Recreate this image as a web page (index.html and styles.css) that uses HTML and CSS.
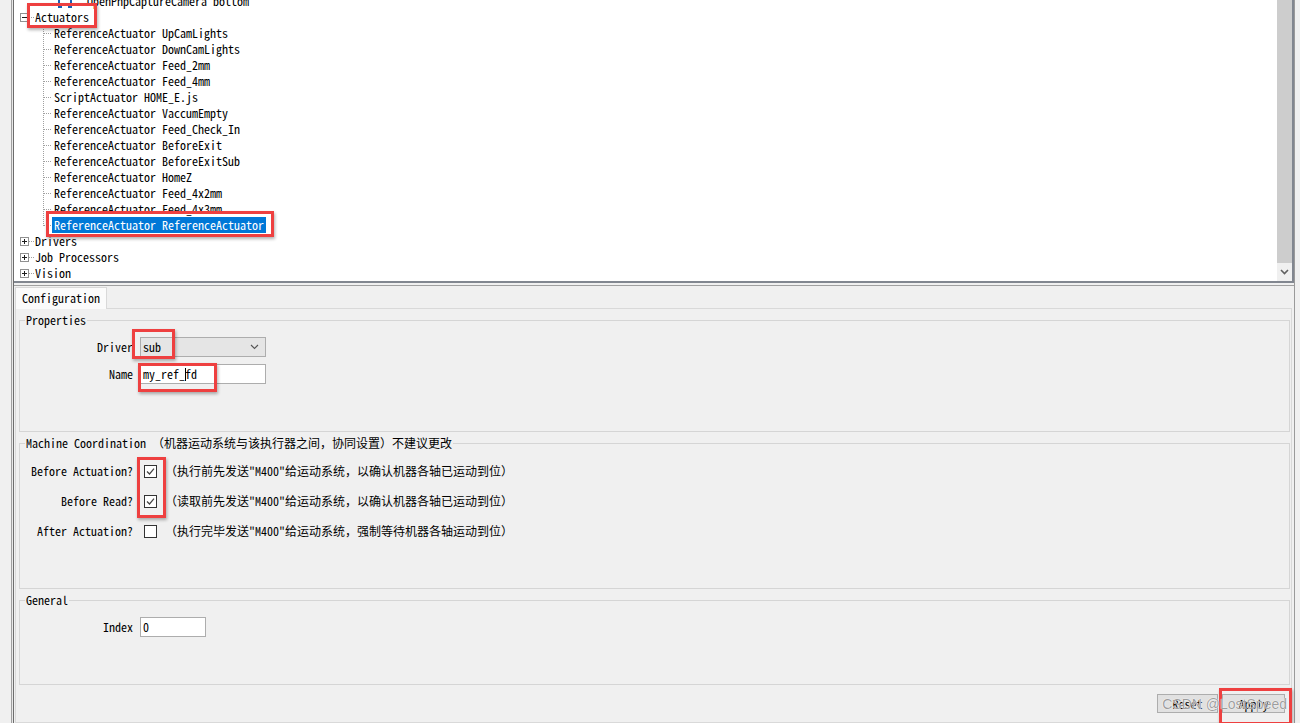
FILE: index.html
```html
<!DOCTYPE html>
<html>
<head>
<meta charset="utf-8">
<link rel="stylesheet" href="styles.css">
</head>
<body>
<div class="app">
  <div class="side"></div>
  <div class="sash"></div>
  <div class="main">
    <div class="tree">
      <div class="tree-view">
        <div class="nodes">
          <div class="row cam-row"><span class="cam-ico"><svg width="16" height="16" viewBox="0 0 16 16"><path d="M2 3v11h3M14 3v11h-3" stroke="#1a5fb4" stroke-width="2" fill="none"/></svg></span><span class="lbl">OpenPnpCaptureCamera bottom</span></div>
          <div class="row top"><span class="exp"><svg width="9" height="9" viewBox="0 0 9 9"><rect x="0.5" y="0.5" width="8" height="8" fill="#fff" stroke="#919191"/><path d="M2 4.5h5" stroke="#1e1e1e"/></svg></span><span class="hline"></span><span class="lbl mark mark-act">Actuators</span></div>
          <div class="row child"><span class="twig"></span><span class="lbl">ReferenceActuator UpCamLights</span></div>
          <div class="row child"><span class="twig"></span><span class="lbl">ReferenceActuator DownCamLights</span></div>
          <div class="row child"><span class="twig"></span><span class="lbl">ReferenceActuator Feed_2mm</span></div>
          <div class="row child"><span class="twig"></span><span class="lbl">ReferenceActuator Feed_4mm</span></div>
          <div class="row child"><span class="twig"></span><span class="lbl">ScriptActuator HOME_E.js</span></div>
          <div class="row child"><span class="twig"></span><span class="lbl">ReferenceActuator VaccumEmpty</span></div>
          <div class="row child"><span class="twig"></span><span class="lbl">ReferenceActuator Feed_Check_In</span></div>
          <div class="row child"><span class="twig"></span><span class="lbl">ReferenceActuator BeforeExit</span></div>
          <div class="row child"><span class="twig"></span><span class="lbl">ReferenceActuator BeforeExitSub</span></div>
          <div class="row child"><span class="twig"></span><span class="lbl">ReferenceActuator HomeZ</span></div>
          <div class="row child"><span class="twig"></span><span class="lbl">ReferenceActuator Feed_4x2mm</span></div>
          <div class="row child"><span class="twig"></span><span class="lbl">ReferenceActuator Feed_4x3mm</span></div>
          <div class="row child"><span class="twig last"></span><span class="lbl sel mark mark-sel">ReferenceActuator ReferenceActuator</span></div>
          <div class="row top"><span class="exp"><svg width="9" height="9" viewBox="0 0 9 9"><rect x="0.5" y="0.5" width="8" height="8" fill="#fff" stroke="#919191"/><path d="M2 4.5h5M4.5 2v5" stroke="#1e1e1e"/></svg></span><span class="hline"></span><span class="lbl">Drivers</span></div>
          <div class="row top"><span class="exp"><svg width="9" height="9" viewBox="0 0 9 9"><rect x="0.5" y="0.5" width="8" height="8" fill="#fff" stroke="#919191"/><path d="M2 4.5h5M4.5 2v5" stroke="#1e1e1e"/></svg></span><span class="hline"></span><span class="lbl">Job Processors</span></div>
          <div class="row top"><span class="exp"><svg width="9" height="9" viewBox="0 0 9 9"><rect x="0.5" y="0.5" width="8" height="8" fill="#fff" stroke="#919191"/><path d="M2 4.5h5M4.5 2v5" stroke="#1e1e1e"/></svg></span><span class="hline"></span><span class="lbl">Vision</span></div>
        </div>
      </div>
      <div class="vscroll">
        <div class="thumb"></div>
        <div class="arrow"><svg width="9" height="6" viewBox="0 0 9 6"><path d="M1 1l3.5 3.5L8 1" stroke="#606060" stroke-width="1.6" fill="none"/></svg></div>
      </div>
    </div>
    <div class="split"></div>
    <div class="tabs"><div class="tab">Configuration</div></div>
    <div class="panel">
      <fieldset class="group g-props">
        <legend>Properties</legend>
        <div class="form">
          <span class="flabel">Driver</span>
          <div class="combo mark mark-sub"><span>sub</span><svg width="9" height="6" viewBox="0 0 9 6"><path d="M1 1l3.5 3.5L8 1" stroke="#555" stroke-width="1.1" fill="none"/></svg></div>
          <span class="flabel">Name</span>
          <div class="field wide mark mark-name">my_ref_<i class="caret"></i>fd</div>
        </div>
      </fieldset>
      <fieldset class="group g-coord">
        <legend>Machine Coordination （机器运动系统与该执行器之间，协同设置）不建议更改</legend>
        <div class="form checks">
          <span class="flabel">Before Actuation?</span>
          <div class="crow"><span class="cb mark mark-cb"><svg width="13" height="13" viewBox="0 0 13 13"><rect x="0.5" y="0.5" width="12" height="12" fill="#fff" stroke="#333"/><path d="M3 6.5l2.5 2.5L10 3.6" stroke="#444" stroke-width="1.2" fill="none"/></svg></span><span class="note">（执行前先发送"M400"给运动系统，以确认机器各轴已运动到位）</span></div>
          <span class="flabel">Before Read?</span>
          <div class="crow"><span class="cb"><svg width="13" height="13" viewBox="0 0 13 13"><rect x="0.5" y="0.5" width="12" height="12" fill="#fff" stroke="#333"/><path d="M3 6.5l2.5 2.5L10 3.6" stroke="#444" stroke-width="1.2" fill="none"/></svg></span><span class="note">（读取前先发送"M400"给运动系统，以确认机器各轴已运动到位）</span></div>
          <span class="flabel">After Actuation?</span>
          <div class="crow"><span class="cb"><svg width="13" height="13" viewBox="0 0 13 13"><rect x="0.5" y="0.5" width="12" height="12" fill="#fff" stroke="#333"/></svg></span><span class="note">（执行完毕发送"M400"给运动系统，强制等待机器各轴运动到位）</span></div>
        </div>
      </fieldset>
      <fieldset class="group g-general">
        <legend>General</legend>
        <div class="form">
          <span class="flabel">Index</span>
          <div class="field short">0</div>
        </div>
      </fieldset>
      <div class="actions">
        <button class="btn reset">Reset</button>
        <button class="btn apply mark mark-apply">Apply</button>
        <span class="wm">CSDN @LostSpeed</span>
      </div>
    </div>
  </div>
  <div class="rstrip"></div>
</div>
</body>
</html>
```
FILE: styles.css
```css
* { box-sizing: border-box; }
html, body { margin: 0; padding: 0; }
body {
  width: 1300px;
  height: 723px;
  overflow: hidden;
  background: #f0f0f0;
  color: #000;
  font-family: "Noto Sans Mono CJK SC", "Liberation Mono", "Noto Sans CJK SC", monospace;
  font-size: 12px;
  line-height: 16px;
}
.app { display: flex; height: 723px; }
.side { width: 11px; background: #f0f0f0; }
.sash {
  width: 3px;
  border-left: 1px solid #a0a0a0;
  border-right: 1px solid #6d6d6d;
  background: #e8e8e8;
}
.main { width: 1280px; display: flex; flex-direction: column; }
.rstrip { width: 6px; border-left: 1px solid #9a9a9a; background: #f0f0f0; }

/* tree */
.tree {
  height: 283px;
  display: flex;
  background: #fff;
  border-bottom: 2px solid #828790;
  border-right: 2px solid #828790;
}
.tree-view { flex: 1; overflow: hidden; }
.nodes { margin-top: -7px; }
.row { height: 16px; display: flex; align-items: center; white-space: pre; }
.lbl { display: inline-block; height: 16px; line-height: 16px; }
.cam-row .cam-ico { width: 16px; height: 16px; margin-left: 43px; }
.cam-row .lbl { margin-left: 14px; }
.top .exp { width: 9px; height: 9px; margin-left: 6px; display: flex; }
.top .hline {
  width: 6px;
  height: 1px;
  background-image: repeating-linear-gradient(to right, #a0a0a0 0 1px, transparent 1px 2px);
}
.child .twig {
  width: 9px;
  height: 16px;
  margin-left: 29px;
  background-image:
    repeating-linear-gradient(to bottom, #a0a0a0 0 1px, transparent 1px 2px),
    repeating-linear-gradient(to right, #a0a0a0 0 1px, transparent 1px 2px);
  background-size: 1px 16px, 8px 1px;
  background-position: 0 0, 1px 8px;
  background-repeat: no-repeat;
}
.child .twig.last { background-size: 1px 9px, 8px 1px; }
.child .lbl { padding: 0 2px; }
.sel { background: #0078d7; color: #fff; }

.vscroll { width: 15px; display: flex; flex-direction: column; background: #f0f0f0; }
.vscroll .thumb { flex: 1; background: #cdcdcd; }
.vscroll .arrow { height: 18px; display: flex; align-items: center; justify-content: center; }

.split { height: 3px; border-bottom: 1px solid #a0a0a0; }
.tabs { height: 22px; padding-top: 1px; display: flex; }
.tab {
  margin-left: 1px;
  height: 22px;
  padding: 0 6px;
  line-height: 20px;
  border: 1px solid #d9d9d9;
  border-bottom: 0;
  background: #fbfbfb;
  position: relative;
  z-index: 1;
}

.panel {
  flex: 1;
  margin: 0 2px 0 1px;
  border: 1px solid #d9d9d9;
  background: #f0f0f0;
  padding: 5px 1px 0 3px;
}
.group {
  margin: 0;
  padding: 0;
  border: 1px solid #d5d5d5;
  min-inline-size: 0;
}
.group legend {
  margin-left: 5px;
  padding: 0 1px;
  line-height: 12px;
  height: 12px;
}
.g-coord { margin-top: 5px; }
.g-general { margin-top: 5px; }

.form {
  display: grid;
  grid-template-columns: 113px auto;
  column-gap: 7px;
  row-gap: 7px;
  padding: 11px 0 47px 0;
  align-items: center;
  justify-content: start;
}
.flabel { text-align: right; line-height: 20px; }
.combo {
  width: 126px;
  height: 20px;
  border: 1px solid #adadad;
  background: #e5e5e5;
  display: flex;
  align-items: center;
  justify-content: space-between;
  padding: 0 6px 0 2px;
}
.field {
  height: 20px;
  border: 1px solid #adadad;
  background: #fff;
  padding-left: 2px;
  line-height: 18px;
  white-space: pre;
}
.field.wide { width: 126px; }
.field.short { width: 66px; }
.caret { display: inline-block; width: 1px; height: 13px; background: #000; vertical-align: -2px; margin-right: -1px; }

.checks { row-gap: 10px; padding: 12px 0 47px 0; }
.crow { height: 20px; display: flex; align-items: center; }
.cb { width: 13px; height: 13px; margin-left: 4px; display: flex; }
.note { margin-left: 8px; }

.actions {
  display: flex;
  justify-content: flex-end;
  gap: 4px;
  margin-top: 9px;
  padding-right: 5px;
  position: relative;
}
.btn {
  height: 19px;
  border: 1px solid #adadad;
  background: #e1e1e1;
  font: inherit;
  line-height: 16px;
  padding: 0;
  color: #000;
}
.btn.reset { width: 61px; }
.btn.apply { width: 63px; }
.wm {
  position: absolute;
  right: 3px;
  top: 1px;
  font-family: "Liberation Sans", Arial, sans-serif;
  font-size: 14px;
  line-height: 18px;
  color: rgba(140,140,140,0.85);
  text-shadow: 0 0 1px #fff, 0 0 1px #fff;
  pointer-events: none;
}

/* red annotation boxes */
.mark { position: relative; }
.mark::after {
  content: "";
  position: absolute;
  border: 3px solid #ee4040;
  box-shadow: 1px 2px 3px rgba(0,0,0,0.3);
  pointer-events: none;
}
.mark-act::after { top: -6px; left: -8px; right: -8px; bottom: -3px; }
.mark-sel::after { top: -6px; left: -6px; right: -8px; bottom: -4px; }
.mark-sub::after { top: -9px; left: -9px; right: 90px; bottom: -3px; }
.mark-name::after { top: -2px; left: -3px; right: 48px; bottom: -9px; }
.mark-cb::after { top: -8px; left: -7px; right: -9px; bottom: -40px; }
.mark-apply::after { top: -7px; left: -4px; right: -8px; bottom: -13px; }
```
